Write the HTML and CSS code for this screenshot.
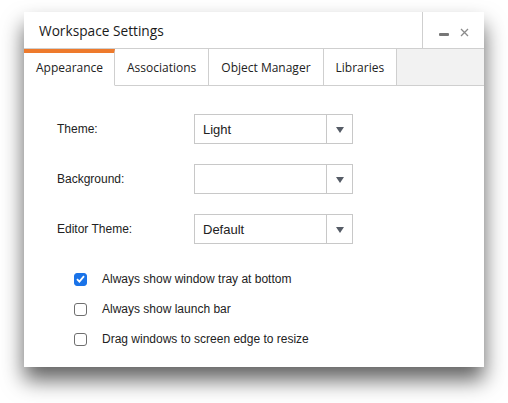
FILE: index.html
```html
<!DOCTYPE html>
<html lang="en">
<head>
    <meta charset="UTF-8">
    <title>Workspace Settings</title>
    <link rel="stylesheet" href="styles.css">
</head>
<body>

    <div class="window">
        <!-- Title bar -->
        <div class="titlebar">
            <div class="title">Workspace Settings</div>
            <div class="win-controls">
                <span class="min"></span>
                <svg class="close" width="9" height="9" viewBox="0 0 9 9">
                    <path d="M1 1 L8 8 M8 1 L1 8" stroke="#8a8a8a" stroke-width="1.3"/>
                </svg>
            </div>
        </div>

        <!-- Tabs -->
        <div class="tabs">
            <div class="tab active">Appearance</div>
            <div class="tab">Associations</div>
            <div class="tab">Object Manager</div>
            <div class="tab">Libraries</div>
            <div class="tab-fill"></div>
        </div>

        <!-- Form -->
        <div class="content">
            <div class="row">
                <label>Theme:</label>
                <div class="select"><span class="value">Light</span><span class="arrow"></span></div>
            </div>
            <div class="row">
                <label>Background:</label>
                <div class="select"><span class="value"></span><span class="arrow"></span></div>
            </div>
            <div class="row">
                <label>Editor Theme:</label>
                <div class="select"><span class="value">Default</span><span class="arrow"></span></div>
            </div>

            <div class="checks">
                <div class="check">
                    <span class="box checked">
                        <svg width="9" height="8" viewBox="0 0 9 8"><path d="M1 4.2 L3.4 6.6 L8 1.2" fill="none" stroke="#fff" stroke-width="1.8"/></svg>
                    </span>
                    Always show window tray at bottom
                </div>
                <div class="check"><span class="box"></span>Always show launch bar</div>
                <div class="check"><span class="box"></span>Drag windows to screen edge to resize</div>
            </div>
        </div>
    </div>

</body>
</html>
```

FILE: styles.css
```css
html, body {
    margin: 0;
    padding: 0;
    background: #ffffff;
    min-height: 100vh;
}

body {
    padding: 12px 0 0 24px;
    box-sizing: border-box;
}

/* Window frame */
.window {
    width: 460px;
    height: 355px;
    background: #ffffff;
    box-shadow: 0 13px 20px rgba(0, 0, 0, 0.62);
    display: flex;
    flex-direction: column;
    font-family: "Open Sans", sans-serif;
    color: #222;
}

.titlebar {
    height: 36px;
    display: flex;
    align-items: center;
    border-bottom: 1px solid #cfcfcf;
}

.title {
    flex: 1;
    padding-left: 15px;
    font-size: 13.7px;
    color: #1a1a1a;
}

.win-controls {
    width: 62px;
    height: 100%;
    border-left: 1px solid #cfcfcf;
    display: flex;
    align-items: center;
    justify-content: center;
    gap: 11px;
    padding-top: 4px;
    box-sizing: border-box;
}

.min {
    width: 10px;
    height: 3px;
    border-radius: 1px;
    background: #777;
    margin-top: 4px;
}

/* Tabs */
.tabs {
    display: flex;
    height: 37px;
}

.tab {
    padding: 0 12px;
    font-size: 12px;
    display: flex;
    align-items: center;
    border-right: 1px solid #cfcfcf;
    border-bottom: 1px solid #cfcfcf;
    background: #fff;
}

.tab.active {
    border-top: 4px solid #ee7a2c;
    border-bottom: 1px solid transparent;
    padding-bottom: 4px;
    width: 66px;
}

.tab-fill {
    flex: 1;
    background: #f2f2f2;
    border-bottom: 1px solid #cfcfcf;
}

/* Form */
.content {
    padding: 28px 0 0 33px;
    font-family: "Liberation Sans", Arial, sans-serif;
    font-size: 12px;
    color: #222;
}

.row {
    display: flex;
    align-items: center;
    height: 30px;
    margin-bottom: 20px;
}

.row label {
    width: 137px;
}

.select {
    width: 159px;
    height: 30px;
    box-sizing: border-box;
    border: 1px solid #c8c8c8;
    display: flex;
    font-size: 13px;
}

.select .value {
    flex: 1;
    display: flex;
    align-items: center;
    padding-left: 8px;
}

.select .arrow {
    width: 25px;
    border-left: 1px solid #c8c8c8;
    position: relative;
}

.select .arrow::after {
    content: "";
    position: absolute;
    left: 9px;
    top: 12px;
    border-left: 4px solid transparent;
    border-right: 4px solid transparent;
    border-top: 6px solid #555c66;
}

.checks {
    padding-left: 17px;
    margin-top: 1px;
}

.check {
    display: flex;
    align-items: center;
    height: 30px;
}

.box {
    width: 13px;
    height: 13px;
    box-sizing: border-box;
    border: 1px solid #6f6f6f;
    border-radius: 3px;
    margin-right: 15px;
    display: flex;
    align-items: center;
    justify-content: center;
}

.box.checked {
    background: #1a73e8;
    border-color: #1a73e8;
}
```
